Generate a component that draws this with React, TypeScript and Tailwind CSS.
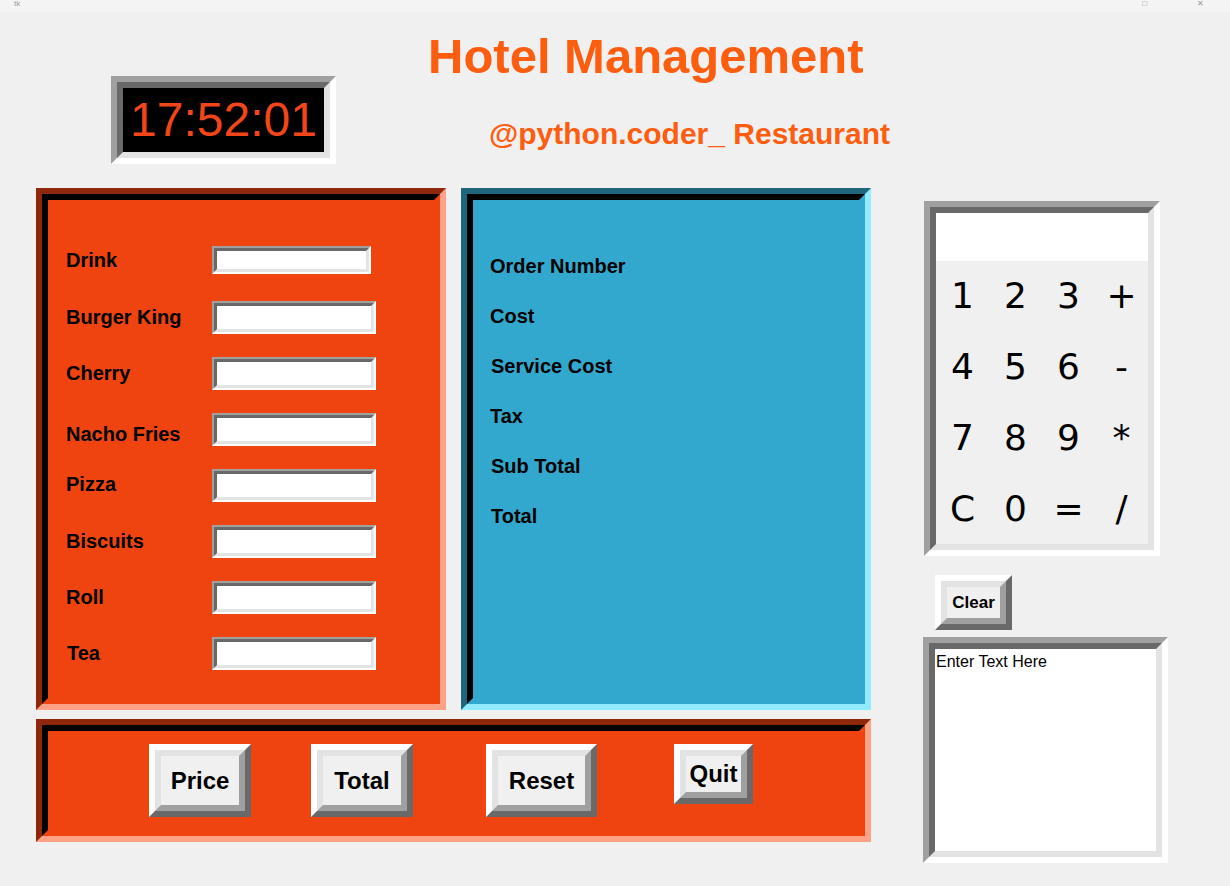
import type { ReactNode } from "react";

const ORDER_ITEMS = [
  { name: "Drink", small: true, label: "" },
  { name: "Burger King", small: false, label: "" },
  { name: "Cherry", small: false, label: "" },
  { name: "Nacho Fries", small: false, label: "pt-[9px]" },
  { name: "Pizza", small: false, label: "pb-[2px]" },
  { name: "Biscuits", small: false, label: "" },
  { name: "Roll", small: false, label: "" },
  { name: "Tea", small: false, label: "pl-[1px]" },
];

const COST_ROWS = [
  { name: "Order Number", label: "" },
  { name: "Cost", label: "" },
  { name: "Service Cost", label: "pl-[1px]" },
  { name: "Tax", label: "" },
  { name: "Sub Total", label: "pl-[1px]" },
  { name: "Total", label: "pl-[1px]" },
];

const KEYS = ["1", "2", "3", "+", "4", "5", "6", "-", "7", "8", "9", "*", "C", "0", "=", "/"];

function Sunken({ className, innerClassName, children }: { className?: string; innerClassName?: string; children?: ReactNode }) {
  return (
    <div className={`border-[6px] border-t-[#a0a0a0] border-l-[#a0a0a0] border-r-white border-b-white ${className ?? ""}`}>
      <div
        className={`h-full w-full border-[6px] border-t-[#696969] border-l-[#696969] border-r-[#e3e3e3] border-b-[#e3e3e3] ${innerClassName ?? ""}`}
      >
        {children}
      </div>
    </div>
  );
}

function Raised({ className, children }: { className?: string; children?: ReactNode }) {
  return (
    <div className={`border-[6px] border-t-white border-l-white border-r-[#696969] border-b-[#696969] ${className ?? ""}`}>
      <div className="flex h-full w-full items-center justify-center border-[6px] border-t-[#e3e3e3] border-l-[#e3e3e3] border-r-[#a0a0a0] border-b-[#a0a0a0] bg-[#f0f0f0] font-bold text-black">
        {children}
      </div>
    </div>
  );
}

function OrangeFrame({ className, children }: { className?: string; children?: ReactNode }) {
  return (
    <div className={`border-[6px] border-t-[#8f280a] border-l-[#8f280a] border-r-[#ffa184] border-b-[#ffa184] ${className ?? ""}`}>
      <div className="h-full w-full border-[6px] border-t-black border-l-black border-r-[#ef440f] border-b-[#ef440f] bg-[#ef440f]">
        {children}
      </div>
    </div>
  );
}

function Entry({ small }: { small: boolean }) {
  return (
    <div
      className={`border-[2px] border-t-[#a0a0a0] border-l-[#a0a0a0] border-r-white border-b-white ${
        small ? "h-[28px] w-[159px]" : "h-[33px] w-[164px]"
      }`}
    >
      <div className="h-full w-full border-[3px] border-t-[#696969] border-l-[#696969] border-r-[#e3e3e3] border-b-[#e3e3e3] bg-white" />
    </div>
  );
}

export default function App() {
  return (
    <div className="h-[886px] w-[1230px] overflow-hidden bg-[#f0f0f0] font-['Liberation_Sans',Arial,sans-serif] text-black">
      {/* window title strip */}
      <div className="flex h-[12px] items-start justify-between bg-[#f4f4f4] px-[14px] text-[8px] leading-[8px] text-[#9a9a9a]">
        <span>tk</span>
        <div className="flex gap-[50px] pr-[12px]">
          <span>□</span>
          <span>✕</span>
        </div>
      </div>

      {/* header */}
      <div className="flex h-[176px] pl-[111px]">
        <Sunken className="mt-[64px] h-[88px] w-[225px]" innerClassName="flex items-center justify-center bg-black">
          <span className="text-[48px] leading-none text-[#f2461a]">17:52:01</span>
        </Sunken>
        <div className="flex flex-col">
          <h1 className="ml-[92px] mt-[16px] text-[49px] font-bold leading-[56px] text-[#fd5d0e]">Hotel Management</h1>
          <p className="ml-[153px] mt-[33px] text-[30px] font-bold leading-[34px] text-[#fd5d0e]">@python.coder_ Restaurant</p>
        </div>
      </div>

      {/* main */}
      <div className="flex pl-[36px]">
        <div className="flex w-[835px] flex-col gap-[9px]">
          <div className="flex gap-[15px]">
            <OrangeFrame className="h-[522px] w-[410px]">
              <div className="flex flex-col pl-[18px] pt-[31px]">
                {ORDER_ITEMS.map((item, i) => (
                  <div key={item.name} className={`flex items-center ${i === 0 ? "h-[58px]" : "h-[56px]"}`}>
                    <span className={`w-[146px] text-[20px] font-bold leading-none ${item.label}`}>{item.name}</span>
                    <Entry small={item.small} />
                  </div>
                ))}
              </div>
            </OrangeFrame>

            <div className="h-[522px] w-[410px] border-[6px] border-t-[#1f657c] border-l-[#1f657c] border-r-[#91ebff] border-b-[#91ebff]">
              <div className="h-full w-full border-[6px] border-t-black border-l-black border-r-[#33a8cf] border-b-[#33a8cf] bg-[#33a8cf]">
                <div className="flex flex-col pl-[17px] pt-[41px]">
                  {COST_ROWS.map((row) => (
                    <div key={row.name} className="flex h-[50px] items-center">
                      <span className={`text-[20px] font-bold leading-none ${row.label}`}>{row.name}</span>
                    </div>
                  ))}
                </div>
              </div>
            </div>
          </div>

          <OrangeFrame className="h-[123px] w-[835px]">
            <div className="flex items-start pl-[101px] pt-[13px] text-[24px]">
              <Raised className="h-[73px] w-[102px]">Price</Raised>
              <Raised className="ml-[60px] h-[73px] w-[102px]">Total</Raised>
              <Raised className="ml-[73px] h-[73px] w-[111px]">Reset</Raised>
              <Raised className="ml-[77px] h-[60px] w-[79px]">Quit</Raised>
            </div>
          </OrangeFrame>
        </div>

        {/* calculator column */}
        <div className="ml-[52px] flex flex-col">
          <Sunken className="ml-[1px] mt-[13px] h-[355px] w-[236px]" innerClassName="flex flex-col bg-[#f0f0f0]">
            <div className="h-[48px] bg-white" />
            <div className="grid flex-1 grid-cols-4 grid-rows-4 font-['DejaVu_Sans',sans-serif] text-[36px] leading-none">
              {KEYS.map((k) => (
                <div key={k} className="flex items-center justify-center">
                  {k}
                </div>
              ))}
            </div>
          </Sunken>

          <Raised className="ml-[12px] mt-[19px] h-[55px] w-[77px]">
            <span className="text-[17px]">Clear</span>
          </Raised>

          <Sunken className="mt-[7px] h-[226px] w-[245px]" innerClassName="bg-white pl-[1px] pt-[1px]">
            <span className="text-[16px] leading-[18px]">Enter Text Here</span>
          </Sunken>
        </div>
      </div>
    </div>
  );
}
